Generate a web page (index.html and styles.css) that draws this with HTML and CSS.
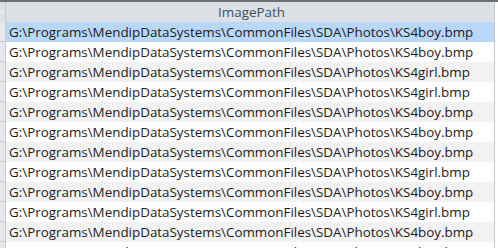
FILE: index.html
```html
<!DOCTYPE html>
<html>
<head>
<meta charset="utf-8">
<link rel="stylesheet" href="styles.css">
</head>
<body>
<div class="topbar"></div>
<div class="grid">
  <div class="row head">
    <div class="sel"><span class="corner"></span></div>
    <div class="cell">ImagePath</div>
  </div>
  <div class="row selected"><div class="sel"></div><div class="cell">G:\Programs\MendipDataSystems\CommonFiles\SDA\Photos\KS4boy.bmp</div></div>
  <div class="row"><div class="sel"></div><div class="cell">G:\Programs\MendipDataSystems\CommonFiles\SDA\Photos\KS4boy.bmp</div></div>
  <div class="row alt"><div class="sel"></div><div class="cell">G:\Programs\MendipDataSystems\CommonFiles\SDA\Photos\KS4girl.bmp</div></div>
  <div class="row"><div class="sel"></div><div class="cell">G:\Programs\MendipDataSystems\CommonFiles\SDA\Photos\KS4girl.bmp</div></div>
  <div class="row alt"><div class="sel"></div><div class="cell">G:\Programs\MendipDataSystems\CommonFiles\SDA\Photos\KS4boy.bmp</div></div>
  <div class="row"><div class="sel"></div><div class="cell">G:\Programs\MendipDataSystems\CommonFiles\SDA\Photos\KS4boy.bmp</div></div>
  <div class="row alt"><div class="sel"></div><div class="cell">G:\Programs\MendipDataSystems\CommonFiles\SDA\Photos\KS4boy.bmp</div></div>
  <div class="row"><div class="sel"></div><div class="cell">G:\Programs\MendipDataSystems\CommonFiles\SDA\Photos\KS4girl.bmp</div></div>
  <div class="row alt"><div class="sel"></div><div class="cell">G:\Programs\MendipDataSystems\CommonFiles\SDA\Photos\KS4boy.bmp</div></div>
  <div class="row"><div class="sel"></div><div class="cell">G:\Programs\MendipDataSystems\CommonFiles\SDA\Photos\KS4girl.bmp</div></div>
  <div class="row alt"><div class="sel"></div><div class="cell">G:\Programs\MendipDataSystems\CommonFiles\SDA\Photos\KS4boy.bmp</div></div>
  <div class="row"><div class="sel"></div><div class="cell">G:\Programs\MendipDataSystems\CommonFiles\SDA\Photos\KS4boy.bmp</div></div>
</div>
</body>
</html>
```

FILE: styles.css
```css
html, body {
  margin: 0;
  padding: 0;
  background: #ffffff;
  overflow: hidden;
}
body {
  width: 498px;
  height: 248px;
  font-family: "Open Sans", "Noto Sans", sans-serif;
  font-size: 13.4px;
  color: #1b1b1b;
}
.topbar {
  height: 2px;
  background: #707070;
}
.grid {
  width: 495px;
  border-right: 1px solid #c8c8c8;
  box-sizing: border-box;
}
.row {
  display: flex;
  height: 20px;
  background: #ffffff;
}
.row.alt {
  background: #f2f2f2;
}
.row.selected {
  background: #b9d7f8;
}
.row.head {
  background: #dde0e4;
  color: #3d4e63;
}
.sel {
  position: relative;
  width: 6px;
  flex: none;
  background: #e6e8eb;
  border-right: 1px solid #c6c9cd;
  border-bottom: 1px solid #c6c9cd;
  box-sizing: border-box;
}
.head .sel {
  background: #dde0e4;
  border-bottom: none;
}
.corner {
  position: absolute;
  left: 0;
  top: 10px;
  width: 3px;
  height: 1px;
  background: #f4f5f6;
}
.cell {
  flex: 1;
  padding-left: 3px;
  line-height: 21px;
  white-space: nowrap;
  overflow: hidden;
}
.head .cell {
  text-align: center;
  line-height: 20px;
}
```
